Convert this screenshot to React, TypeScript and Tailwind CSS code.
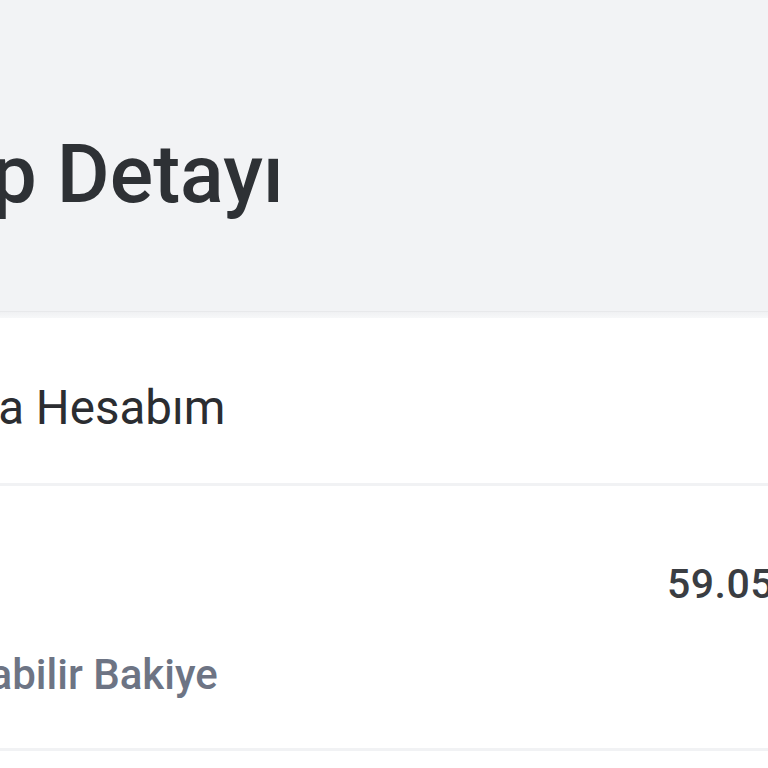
export default function App() {
  return (
    <div className="h-[768px] w-[768px] overflow-hidden bg-white font-['Roboto',sans-serif]">
      {/* page header */}
      <div className="bg-[#f2f3f5]">
        <div className="h-[312px] overflow-hidden border-b border-[#e8e9eb] pt-[134px]">
          <h1 className="-ml-[195px] whitespace-nowrap text-[81px] font-medium leading-none text-[#2e3135]">
            Hesap Detayı
          </h1>
        </div>
        <div className="h-[6px] bg-gradient-to-b from-[#f0f1f3] to-[#f7f8f9]" />
      </div>

      {/* account name */}
      <div className="h-[168px] overflow-hidden border-b-[3px] border-[#f1f2f4] pt-[67px]">
        <div className="-ml-[59px] whitespace-nowrap text-[47.5px] font-normal leading-none text-[#2b2d31]">
          Ana Hesabım
        </div>
      </div>

      {/* balance */}
      <div className="h-[265px] overflow-hidden border-b-[3px] border-[#f1f2f4] pt-[78px]">
        <div className="whitespace-nowrap pl-[667px] text-[41px] font-medium leading-none tracking-[0.5px] text-[#3a3d42]">
          59.050,00 TL
        </div>
        <div className="mt-[49px] -ml-[149px] whitespace-nowrap text-[42px] font-medium leading-none text-[#6d7484]">
          Kullanılabilir Bakiye
        </div>
      </div>
    </div>
  );
}
